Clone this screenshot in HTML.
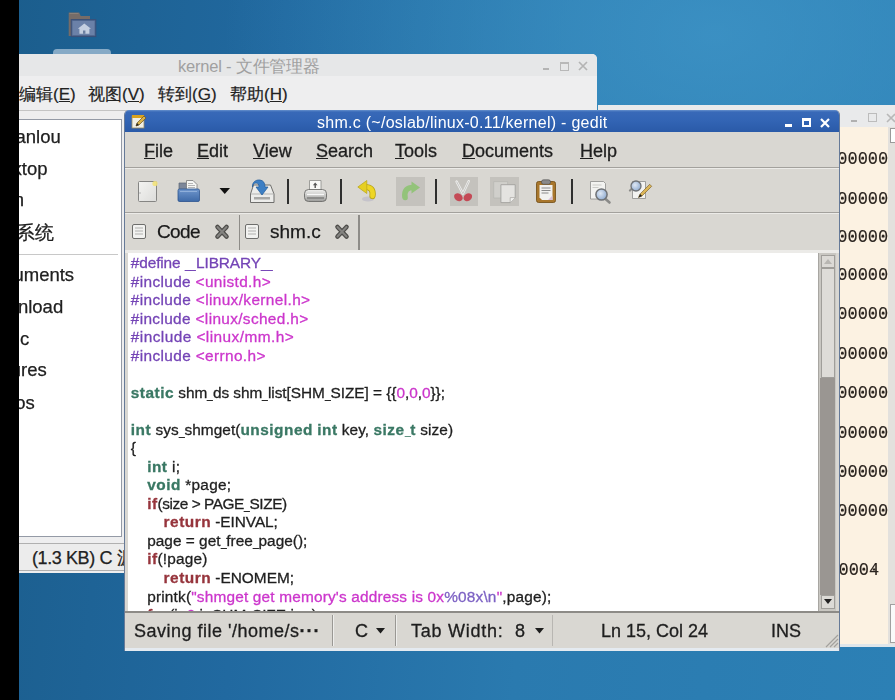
<!DOCTYPE html>
<html><head><meta charset="utf-8">
<style>
*{margin:0;padding:0;box-sizing:border-box}
html,body{width:895px;height:700px;overflow:hidden}
body{position:relative;font-family:"Liberation Sans",sans-serif;background:radial-gradient(ellipse 55% 45% at 80% 5%,rgba(64,150,200,.75),rgba(64,150,200,0)),linear-gradient(95deg,#1b5d8c 0%,#2169a0 30%,#2a7aaf 60%,#2c80b5 100%)}
.a{position:absolute}
.nw{white-space:nowrap}
svg{position:absolute;overflow:visible}
/* code */
.code{left:128px;top:253px;width:690px;height:358px;background:#fff;overflow:hidden}
.ln{position:absolute;left:2.8px;font-size:15.4px;line-height:18px;white-space:pre;color:#1f1f1f;-webkit-text-stroke:0.3px currentColor}
.i1{left:19.2px}.i2{left:35.6px}
.u{font-style:normal;display:inline-block;width:5.7px;letter-spacing:0;transform:scaleX(.67);transform-origin:0 0}
.ty,.kw{letter-spacing:0.5px}
.pp{color:#7444b6}.pp2{color:#7d62c4}.st{color:#cc36cc}.ty{color:#3a7864;font-weight:bold}.kw{color:#96343c;font-weight:bold}
.num{position:absolute;right:6.5px;font-family:"Liberation Mono",monospace;font-size:18px;line-height:22px;color:#2a241f;white-space:nowrap;-webkit-text-stroke:0.15px #2a241f;transform:scaleX(.944);transform-origin:100% 0;background-image:radial-gradient(circle,#2a241f 1.1px,transparent 1.6px);background-size:10.8px 22px;background-position:0 -0.5px;background-repeat:repeat-x}
.mi{position:absolute;top:140px;font-size:18px;line-height:22px;color:#1e1e1e;white-space:nowrap;-webkit-text-stroke:0.3px currentColor}
.fmm{position:absolute;top:85px;font-size:17px;line-height:20px;color:#222;white-space:nowrap;-webkit-text-stroke:0.2px currentColor}
.sb{position:absolute;font-size:18.5px;line-height:20px;color:#202020;white-space:nowrap;-webkit-text-stroke:0.25px currentColor}
.sep{position:absolute;top:179px;width:2px;height:25px;background:#2f2f2f}
.stt{position:absolute;top:620px;font-size:18px;line-height:22px;color:#1e1e1e;white-space:nowrap;-webkit-text-stroke:0.3px currentColor}
</style></head><body><div id="wrap" style="position:absolute;left:0;top:0;width:895px;height:700px;overflow:hidden;filter:blur(0.35px)">

<!-- desktop icon -->
<svg style="left:68px;top:12px" width="30" height="27" viewBox="0 0 30 27">
  <path d="M0.7 0.6h10.5l1.5 3.5h9.3v20H0.7z" fill="#766c68"/>
  <path d="M1.5 1.5h9" stroke="#8c8078" stroke-width="1"/>
  <rect x="3.2" y="7.6" width="24.6" height="17" fill="#52688f" stroke="#3a4f78" stroke-width="1"/>
  <rect x="4.5" y="9" width="22" height="14" fill="#6b81a8"/>
  <path d="M16.3 11.6l6.7 5.2h-1.6v5h-10v-5H9.8z" fill="#c4cfe0"/>
  <rect x="15" y="18.5" width="2.4" height="3.3" fill="#6b7fa0"/>
</svg>
<div class="a" style="left:53px;top:49px;width:58px;height:6px;background:#86aac6;border-radius:4px 4px 0 0"></div>

<!-- file manager -->
<div class="a" style="left:19px;top:54px;width:578px;height:519px;background:#eeeeef;border-top-right-radius:5px"></div>
<div class="a" style="left:19px;top:54px;width:578px;height:22px;background:#e6e7e8;border-top-right-radius:5px"></div>
<div class="a nw" style="left:178px;top:56px;font-size:16.5px;line-height:20px;color:#a0a0a0;letter-spacing:-0.2px">kernel - 文件管理器</div>
<div class="a" style="left:543px;top:68px;width:6px;height:2px;background:#b4b4b4"></div>
<div class="a" style="left:560px;top:62px;width:9px;height:9px;border:1.3px solid #b8b8b8;border-top-width:2px"></div>
<svg style="left:578px;top:61px" width="10" height="10"><path d="M1 1L9 9M9 1L1 9" stroke="#b4b4b4" stroke-width="1.7"/></svg>
<div class="fmm" style="left:19px;clip-path:inset(0)">编辑(<u>E</u>)</div>
<div class="fmm" style="left:88px">视图(<u>V</u>)</div>
<div class="fmm" style="left:158px">转到(<u>G</u>)</div>
<div class="fmm" style="left:230px">帮助(<u>H</u>)</div>
<div class="a" style="left:19px;top:110px;width:578px;height:1px;background:#c4c4c4"></div>
<div class="a" style="left:19px;top:119px;width:103px;height:418px;background:#fff;border:1px solid #949aa6;border-left:none"></div>
<div class="sb" style="top:126.9px;right:834.2px">lianlou</div>
<div class="sb" style="top:158.5px;right:847.5px">Desktop</div>
<div class="sb" style="top:190.0px;right:871.0px">Human</div>
<div class="sb" style="top:222.5px;right:840.6px">文件系统</div>
<div class="a" style="left:19px;top:254px;width:99px;height:1px;background:#c8c8c8"></div>
<div class="sb" style="top:264.5px;right:820.9px">Documents</div>
<div class="sb" style="top:296.8px;right:831.8px">Download</div>
<div class="sb" style="top:328.8px;right:865.8px">Music</div>
<div class="sb" style="top:360.4px;right:848.2px">Pictures</div>
<div class="sb" style="top:392.5px;right:860.2px">Videos</div>
<div class="a" style="left:19px;top:543px;width:578px;height:28px;background:#ececec;border-top:1px solid #b0b0b0;border-bottom:1px solid #b0b0b0"></div>
<div class="a nw" style="left:32px;top:547px;font-size:18px;line-height:22px;color:#222;letter-spacing:-0.4px;-webkit-text-stroke:0.25px currentColor">(1.3 KB) C 源</div>

<!-- right window -->
<div class="a" style="left:598px;top:105px;width:297px;height:541px;background:#fcf2e2"></div>
<div class="a" style="left:598px;top:105px;width:297px;height:22px;background:#e9eaeb"></div>
<div class="a" style="left:851px;top:120px;width:6px;height:2px;background:#b0b0b0"></div>
<div class="a" style="left:868px;top:113px;width:9px;height:9px;border:1.5px solid #bcbcbc"></div>
<svg style="left:886px;top:113px" width="10" height="10"><path d="M1 1L9 9M9 1L1 9" stroke="#b8b8b8" stroke-width="1.6"/></svg>
<div class="a" style="left:888px;top:127px;width:7px;height:519px;background:#e3e1dd"></div>
<div class="a" style="left:890px;top:128px;width:5px;height:15px;background:#fff;border:1px solid #9a9a9a;border-right:none"></div>
<div class="a" style="left:890px;top:604px;width:5px;height:39px;background:#fafafa;border:1px solid #a0a0a0;border-right:none"></div>
<div class="a" style="left:598px;top:0;width:297px;height:700px;overflow:hidden;pointer-events:none">
<div class="num" style="top:148.3px">000000000</div>
<div class="num" style="top:187.5px">000000000</div>
<div class="num" style="top:226.1px">000000000</div>
<div class="num" style="top:264.3px">000000000</div>
<div class="num" style="top:302.5px">000000000</div>
<div class="num" style="top:342.7px">000000000</div>
<div class="num" style="top:382.3px">000000000</div>
<div class="num" style="top:421.6px">000000000</div>
<div class="num" style="top:460.8px">000000000</div>
<div class="num" style="top:499.5px">000000000</div>
<div class="num" style="top:558.5px;right:16.1px">000000004</div>
</div>
<div class="a" style="left:598px;top:644px;width:297px;height:3px;background:#dfe6ea"></div>

<!-- gedit -->
<div class="a" style="left:124px;top:110px;width:716px;height:541px;background:#d9d7d2;border:1px solid #667a98;border-top:none;border-radius:5px 5px 0 0;overflow:hidden">
  <div class="a" style="left:0;top:0;width:716px;height:22px;background:linear-gradient(#6690cc 0,#3869b8 2px,#3264b4 50%,#2a5aa8)"></div>
</div>
<div class="a" style="left:125px;top:648px;width:714px;height:3px;background:#e4eaf0"></div>
<!-- title icon -->
<svg style="left:130px;top:113px" width="17" height="17" viewBox="0 0 17 17">
  <rect x="2" y="3" width="12" height="12" fill="#f0efe6" stroke="#9a8a60" stroke-width=".8"/>
  <rect x="2" y="2" width="12" height="3" fill="#d9a21e"/>
  <path d="M6 13l1-3 7-7 2 2-7 7z" fill="#d8b24a" stroke="#6a5020" stroke-width=".7"/>
  <path d="M6 13l1-3 2 2z" fill="#222"/>
</svg>
<div class="a nw" style="left:317px;top:114px;font-size:16px;line-height:18px;color:#fff;letter-spacing:0.27px">shm.c (~/oslab/linux-0.11/kernel) - gedit</div>
<div class="a" style="left:785px;top:124px;width:7px;height:3px;background:#fff"></div>
<div class="a" style="left:802px;top:118px;width:9px;height:9px;border:2px solid #fff;border-top-width:3px"></div>
<svg style="left:820px;top:118px" width="10" height="10"><path d="M1 1L9 9M9 1L1 9" stroke="#fff" stroke-width="2.2"/></svg>

<!-- menubar -->
<div class="mi" style="left:144px"><u>F</u>ile</div>
<div class="mi" style="left:197px"><u>E</u>dit</div>
<div class="mi" style="left:253px"><u>V</u>iew</div>
<div class="mi" style="left:316px"><u>S</u>earch</div>
<div class="mi" style="left:395px"><u>T</u>ools</div>
<div class="mi" style="left:462px"><u>D</u>ocuments</div>
<div class="mi" style="left:580px"><u>H</u>elp</div>
<div class="a" style="left:125px;top:167px;width:714px;height:1px;background:#a3a19d"></div>
<div class="a" style="left:125px;top:168px;width:714px;height:1px;background:#ecebe8"></div>

<!-- toolbar -->
<svg style="left:137px;top:180px" width="22" height="23" viewBox="0 0 22 23">
  <defs><linearGradient id="gpg" x1="0" y1="0" x2="1" y2="1"><stop offset="0" stop-color="#f4f4f2"/><stop offset="1" stop-color="#dcdcda"/></linearGradient></defs>
  <rect x="1.5" y="1.5" width="18" height="20" rx="1" fill="url(#gpg)" stroke="#858583"/>
  <circle cx="18" cy="3.5" r="2.6" fill="#f2e27a" opacity=".9"/>
  <path d="M3 12v2" stroke="#aaa" stroke-width=".8"/>
</svg>
<svg style="left:177px;top:179px" width="24" height="24" viewBox="0 0 24 24">
  <path d="M2 4h7l1.5 2H13v16H2z" fill="#7d8799" stroke="#5d6575" stroke-width=".7"/>
  <path d="M9.5 1.5h6.5l4 4V14H9.5z" fill="#f6f6f4" stroke="#7a7a7a" stroke-width=".8"/>
  <path d="M11 4.5h5M11 6.5h7M11 8.5h7" stroke="#9a9a9a" stroke-width=".7"/>
  <defs><linearGradient id="gof" x1="0" y1="0" x2="0" y2="1"><stop offset="0" stop-color="#6f96cc"/><stop offset="1" stop-color="#3e6aa8"/></linearGradient></defs>
  <rect x="1" y="10" width="21.5" height="12.5" rx="1.5" fill="url(#gof)" stroke="#2f5690" stroke-width=".8"/>
  <path d="M3 12.5h17" stroke="#9ab8e0" stroke-width=".8"/>
</svg>
<svg style="left:219px;top:187px" width="12" height="8"><path d="M0.5 1h10.5l-5.25 6z" fill="#111"/></svg>
<svg style="left:248px;top:178px" width="28" height="27" viewBox="0 0 28 27">
  <path d="M5.5 7h17l3.5 9v8.5H2.5V16z" fill="#ececea" stroke="#6f6f6d" stroke-width="1"/>
  <path d="M3 16h22.5" stroke="#b5b5b3" stroke-width="1"/>
  <rect x="6" y="19" width="16" height="2.5" fill="#a8a8a6"/>
  <path d="M4.5 9C4 4 8 1.5 12 2c3.5.5 5 3 5 7h3l-6 8-6-8h3c0-2.5-1-4-3-4-2 0-3 1.5-3.5 4z" fill="#3d7fc4" stroke="#1f5a9a" stroke-width=".7"/>
</svg>
<div class="sep" style="left:287px"></div>
<svg style="left:303px;top:179px" width="25" height="24" viewBox="0 0 25 24">
  <path d="M6.5 1.5h11.5v10H6.5z" fill="#f8f8f6" stroke="#8a8a88" stroke-width=".8"/>
  <path d="M12.2 3.5l-2.3 2.8h1.6v2.6h1.4V6.3h1.6z" fill="#555"/>
  <defs><linearGradient id="gpr" x1="0" y1="0" x2="0" y2="1"><stop offset="0" stop-color="#f0f0ee"/><stop offset=".5" stop-color="#c8c8c6"/><stop offset="1" stop-color="#9c9c9a"/></linearGradient></defs>
  <rect x="1.5" y="10.5" width="22" height="12" rx="4" fill="url(#gpr)" stroke="#6c6c6a" stroke-width=".9"/>
  <path d="M4 15.5h17" stroke="#f8f8f8" stroke-width="1.2"/>
  <path d="M4 19h17" stroke="#7c7c7a" stroke-width="1.4"/>
</svg>
<div class="sep" style="left:340px"></div>
<svg style="left:357px;top:179px" width="22" height="24" viewBox="0 0 22 24">
  <ellipse cx="11" cy="20" rx="6" ry="2.5" fill="#b4b2c4" opacity=".55"/>
  <path d="M8 8C13.5 8 16.5 10.5 15.5 17" stroke="#b8a418" stroke-width="6.2" fill="none" stroke-linecap="round"/>
  <path d="M8 8C13.5 8 16.5 10.5 15.5 17" stroke="#eed626" stroke-width="4.6" fill="none" stroke-linecap="round"/>
  <path d="M0.8 8L9.8 1.5v13z" fill="#e6cf22" stroke="#b8a418" stroke-width=".7"/>
</svg>
<div class="a" style="left:396px;top:177px;width:29px;height:29px;background:#c4c2bd"></div>
<svg style="left:400px;top:180px" width="22" height="24" viewBox="0 0 22 24">
  <path d="M13 7.5C7.5 7.5 4 10 5 17.5" stroke="#93c37a" stroke-width="5.6" fill="none" stroke-linecap="round"/>
  <path d="M20 7.5L11.5 1.5v12z" fill="#93c37a"/>
</svg>
<div class="sep" style="left:435px"></div>
<div class="a" style="left:450px;top:177px;width:28px;height:29px;background:#c4c2bd"></div>
<svg style="left:451px;top:179px" width="26" height="25" viewBox="0 0 26 25">
  <path d="M5.6 2.6l6.3 12M17.7 2.2l-5.8 12.4" stroke="#f0f0ee" stroke-width="2.4" stroke-linecap="round"/>
  <path d="M5.6 2.6l6.3 12M17.7 2.2l-5.8 12.4" stroke="#9c9c9a" stroke-width=".5"/>
  <ellipse cx="7.4" cy="18.2" rx="4.6" ry="3.6" transform="rotate(35 7.4 18.2)" fill="#c44a56"/>
  <ellipse cx="16.8" cy="18.2" rx="4.6" ry="3.6" transform="rotate(-35 16.8 18.2)" fill="#c44a56"/>
</svg>
<div class="a" style="left:490px;top:177px;width:29px;height:29px;background:#c4c2bd"></div>
<svg style="left:490px;top:177px" width="30" height="29" viewBox="0 0 30 29">
  <path d="M3.7 4.6h13.9v16.4H3.7z" fill="#d0cfcb" stroke="#b8b7b3" stroke-width=".8"/>
  <path d="M10.9 7.7h14.3v12.9l-5 5H10.9z" fill="#e4e3e0" stroke="#a3a29e" stroke-width=".9"/>
  <path d="M25.2 20.6h-5v5" fill="#f2f2f0" stroke="#a3a29e" stroke-width=".7"/>
</svg>
<svg style="left:535px;top:179px" width="22" height="24" viewBox="0 0 22 24">
  <rect x="1.5" y="2.5" width="19" height="21" rx="2" fill="#a8762c" stroke="#6e4a12" stroke-width=".8"/>
  <path d="M4.5 6h13v15H7l-2.5-2.5z" fill="#f2f2f0"/>
  <rect x="6.5" y=".8" width="9" height="4.5" rx="2" fill="#8a8a8a" stroke="#4a4a4a" stroke-width=".6"/>
  <path d="M6.5 9h9M6.5 11.5h9M6.5 14h7" stroke="#8a8a8a" stroke-width="1.1"/>
  <path d="M13 21l4.5-4.5v4.5z" fill="#d8c0d8"/>
</svg>
<div class="sep" style="left:571px"></div>
<svg style="left:589px;top:180px" width="24" height="24" viewBox="0 0 24 24">
  <path d="M1.5 1.5h13l2 2v15.5h-15z" fill="#f3f3f1" stroke="#8c8c8a" stroke-width=".8"/>
  <path d="M3.5 5h9M3.5 7.5h6" stroke="#c0c0be" stroke-width=".8"/>
  <path d="M16 18.5l4.5 4" stroke="#8a8a88" stroke-width="2.6" stroke-linecap="round"/>
  <defs><radialGradient id="gmg" cx=".4" cy=".4" r=".7"><stop offset="0" stop-color="#dfe8f4"/><stop offset="1" stop-color="#86a4cc"/></radialGradient></defs>
  <circle cx="12.5" cy="14.5" r="5.6" fill="url(#gmg)" stroke="#6f7276" stroke-width="1.5"/>
</svg>
<svg style="left:628px;top:179px" width="26" height="24" viewBox="0 0 26 24">
  <path d="M4.5 2.5h13v17h-13z" fill="#f3f3f1" stroke="#8c8c8a" stroke-width=".8"/>
  <path d="M2 11.5l3-3" stroke="#8a8a88" stroke-width="2.2" stroke-linecap="round"/>
  <circle cx="8" cy="7" r="5" fill="url(#gmg)" stroke="#6f7276" stroke-width="1.3"/>
  <path d="M10.5 18.5l1.6-3.6 9.6-9.6 2 2-9.6 9.6z" fill="#dcb658" stroke="#6e5420" stroke-width=".6"/>
  <path d="M10.5 18.5l1.6-3.6 2 2z" fill="#1e1e1e"/>
</svg>
<div class="a" style="left:125px;top:212px;width:714px;height:1px;background:#a3a19d"></div>
<div class="a" style="left:125px;top:213px;width:714px;height:1px;background:#ecebe8"></div>

<!-- tabs -->
<div class="a" style="left:239px;top:215px;width:1px;height:35px;background:#8e8c88"></div>
<div class="a" style="left:358px;top:215px;width:2px;height:35px;background:#8e8c88"></div>
<svg style="left:131px;top:223px" width="16" height="16" viewBox="0 0 16 16">
  <rect x="1.5" y="1.5" width="13" height="14" rx="1.5" fill="#f2f2f0" stroke="#6e6e6c"/>
  <path d="M4 5h8M4 8h8M4 11h8" stroke="#b0b0ae" stroke-width="1"/>
</svg>
<div class="a nw" style="left:157px;top:221px;font-size:19px;line-height:22px;color:#1a1a1a;letter-spacing:-0.6px;-webkit-text-stroke:0.25px currentColor">Code</div>
<svg style="left:214px;top:224px" width="17" height="16" viewBox="0 0 17 16"><path d="M3.5 3l9 9.5M12.5 3l-9 9.5" stroke="#4e4d4a" stroke-width="4.6" stroke-linecap="round"/><path d="M3.5 3l9 9.5M12.5 3l-9 9.5" stroke="#858481" stroke-width="2" stroke-linecap="round"/></svg>
<svg style="left:244px;top:223px" width="16" height="16" viewBox="0 0 16 16">
  <rect x="1.5" y="1.5" width="13" height="14" rx="1.5" fill="#f2f2f0" stroke="#6e6e6c"/>
  <path d="M4 5h8M4 8h8M4 11h8" stroke="#b0b0ae" stroke-width="1"/>
</svg>
<div class="a nw" style="left:270px;top:221px;font-size:19px;line-height:22px;color:#1a1a1a;-webkit-text-stroke:0.25px currentColor">shm.c</div>
<svg style="left:334px;top:224px" width="17" height="16" viewBox="0 0 17 16"><path d="M3.5 3l9 9.5M12.5 3l-9 9.5" stroke="#4e4d4a" stroke-width="4.6" stroke-linecap="round"/><path d="M3.5 3l9 9.5M12.5 3l-9 9.5" stroke="#858481" stroke-width="2" stroke-linecap="round"/></svg>

<!-- code area -->
<div class="a" style="left:125px;top:250px;width:714px;height:3px;background:#ecebe8"></div>
<div class="a code">
<div class="ln i0" style="top:1.00px;letter-spacing:-0.111px"><span class="pp">#define <i class="u">_</i><i class="u">_</i>LIBRARY<i class="u">_</i><i class="u">_</i></span></div>
<div class="ln i0" style="top:19.53px;letter-spacing:0.353px"><span class="pp">#include </span><span class="st">&lt;unistd.h&gt;</span></div>
<div class="ln i0" style="top:38.06px;letter-spacing:0.376px"><span class="pp">#include </span><span class="st">&lt;linux/kernel.h&gt;</span></div>
<div class="ln i0" style="top:56.59px;letter-spacing:0.346px"><span class="pp">#include </span><span class="st">&lt;linux/sched.h&gt;</span></div>
<div class="ln i0" style="top:75.12px;letter-spacing:0.443px"><span class="pp">#include </span><span class="st">&lt;linux/mm.h&gt;</span></div>
<div class="ln i0" style="top:93.65px;letter-spacing:0.367px"><span class="pp">#include </span><span class="st">&lt;errno.h&gt;</span></div>
<div class="ln i0" style="top:112.18px;letter-spacing:0px"></div>
<div class="ln i0" style="top:130.71px;letter-spacing:-0.044px"><span class="ty">static</span> shm<i class="u">_</i>ds shm<i class="u">_</i>list[SHM<i class="u">_</i>SIZE] = {{<span class="st">0</span>,<span class="st">0</span>,<span class="st">0</span>}};</div>
<div class="ln i0" style="top:149.24px;letter-spacing:0px"></div>
<div class="ln i0" style="top:167.77px;letter-spacing:0.062px"><span class="ty">int</span> sys<i class="u">_</i>shmget(<span class="ty">unsigned</span> <span class="ty">int</span> key, <span class="ty">size<i class="u">_</i>t</span> size)</div>
<div class="ln i0" style="top:186.30px;letter-spacing:0px">{</div>
<div class="ln i1" style="top:204.83px;letter-spacing:0.283px"><span class="ty">int</span> i;</div>
<div class="ln i1" style="top:223.36px;letter-spacing:0.236px"><span class="ty">void</span> *page;</div>
<div class="ln i1" style="top:241.89px;letter-spacing:-0.45px"><span class="kw">if</span>(size &gt; PAGE<i class="u">_</i>SIZE)</div>
<div class="ln i2" style="top:260.42px;letter-spacing:-0.06px"><span class="kw">return</span> -EINVAL;</div>
<div class="ln i1" style="top:278.95px;letter-spacing:0.017px">page = get<i class="u">_</i>free<i class="u">_</i>page();</div>
<div class="ln i1" style="top:297.48px;letter-spacing:0.156px"><span class="kw">if</span>(!page)</div>
<div class="ln i2" style="top:316.01px;letter-spacing:0.007px"><span class="kw">return</span> -ENOMEM;</div>
<div class="ln i1" style="top:334.54px;letter-spacing:0.176px">printk(<span class="st">"shmget get memory's address is 0x</span><span class="pp2">%08x\n</span><span class="st">"</span>,page);</div>
<div class="ln i1" style="top:353.07px;letter-spacing:0px"><span class="kw">for</span>(i=<span class="st">0</span>;i&lt;SHM<i class="u">_</i>SIZE;i++)</div>
</div>
<!-- scrollbar -->
<div class="a" style="left:818px;top:253px;width:18px;height:358px;background:#c9c7c2;border-left:1px solid #a8a6a2"></div>
<div class="a" style="left:820px;top:378px;width:15px;height:217px;background:#9a9692"></div>
<div class="a" style="left:821px;top:255px;width:14px;height:13px;background:#dcdad6;border:1px solid #a09e9a"></div>
<div class="a" style="left:821px;top:268px;width:14px;height:110px;background:#dedcd8;border:1px solid #a09e9a"></div>
<div class="a" style="left:821px;top:595px;width:14px;height:14px;background:#dcdad6;border:1px solid #a09e9a"></div>
<svg style="left:824px;top:599px" width="8" height="5"><path d="M0 0h8l-4 5z" fill="#222"/></svg>
<svg style="left:824px;top:259px" width="8" height="5"><path d="M0 5h8l-4-5z" fill="#b8b6b2"/></svg>
<div class="a" style="left:125px;top:611px;width:714px;height:2px;background:#8d8b87"></div>

<!-- status bar -->
<div class="stt" style="left:134px;letter-spacing:0.5px">Saving file '/home/s<b style="font-weight:bold;letter-spacing:1px">···</b></div>
<div class="a" style="left:332px;top:615px;width:1px;height:31px;background:#9a9894"></div>
<div class="a" style="left:333px;top:615px;width:1px;height:31px;background:#eeeeec"></div>
<div class="stt" style="left:355px">C</div>
<svg style="left:376px;top:628px" width="9" height="6"><path d="M0 0h9l-4.5 5.5z" fill="#1e1e1e"/></svg>
<div class="a" style="left:395px;top:615px;width:1px;height:31px;background:#9a9894"></div>
<div class="a" style="left:396px;top:615px;width:1px;height:31px;background:#eeeeec"></div>
<div class="stt" style="left:411px;letter-spacing:0.75px">Tab Width:</div>
<div class="stt" style="left:515px">8</div>
<svg style="left:535px;top:628px" width="9" height="6"><path d="M0 0h9l-4.5 5.5z" fill="#1e1e1e"/></svg>
<div class="a" style="left:552px;top:615px;width:1px;height:31px;background:#b8b6b2"></div>
<div class="stt" style="left:601px">Ln 15, Col 24</div>
<div class="stt" style="left:771px">INS</div>
<svg style="left:824px;top:633px" width="15" height="15"><path d="M14 2L2 14M14 6L6 14M14 10L10 14" stroke="#a3a19d" stroke-width="1.2"/></svg>
<div class="a" style="left:0;top:0;width:19px;height:700px;background:#000"></div>
</div></body></html>
